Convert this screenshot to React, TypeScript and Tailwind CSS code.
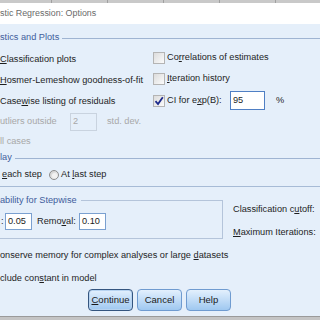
import React from 'react';

const Check = ({ checked = false }: { checked?: boolean }) => (
  <div className="w-[12px] h-[12px] border border-[#b4b4b4] bg-gradient-to-br from-[#dcdcdc] to-[#fbfbfb] flex items-center justify-center shrink-0">
    {checked && (
      <svg width="10" height="10" viewBox="0 0 10 10">
        <path d="M1.5 5.2 L4 8 L8.8 1.2" stroke="#1c2a8c" strokeWidth="1.8" fill="none" />
      </svg>
    )}
  </div>
);

const Field = ({ value, w }: { value: string; w: string }) => (
  <div className={`${w} h-[17px] flex items-center pl-[2px] border border-[#7aa0d0] bg-white text-[#1a1a1a]`}>
    {value}
  </div>
);

const Btn = ({ children, focus = false }: { children: React.ReactNode; focus?: boolean }) => (
  <button
    className={`w-[45px] h-[22px] rounded-[4px] bg-gradient-to-b from-[#e3f0fd] to-[#9fc8f0] text-[9.5px] text-[#1a1a1a] ${
      focus ? 'border border-[#34557f] shadow-[inset_0_0_0_1px_#b7d3f0]' : 'border border-[#6f9bd0]'
    }`}
  >
    {children}
  </button>
);

export default function App() {
  return (
    <div className="w-[320px] h-[320px] overflow-hidden flex flex-col bg-[#e5effa] font-['Liberation_Sans',Arial,sans-serif] text-[9.2px] text-[#1e1e1e] leading-none">
      <div className="h-[3px] bg-[#c9c9c9] flex">
        <div className="w-[52px] border-r border-[#a0a0a0]" />
        <div className="w-[56px] border-r border-[#a0a0a0]" />
        <div className="w-[56px] border-r border-[#a0a0a0]" />
        <div className="w-[56px] border-r border-[#a0a0a0]" />
        <div className="w-[56px] border-r border-[#a0a0a0]" />
      </div>
      <div className="h-[21px] bg-white flex items-center text-[8.9px] text-[#6a6a6a]">stic Regression: Options</div>

      <div className="mt-[7px] h-[14px] flex items-center gap-[3px] text-[#3f5d9c]">
        <span>stics and Plots</span>
        <div className="flex-1 h-px bg-[#9fb4d2]" />
      </div>

      <div className="mt-[4px] flex flex-col">
        <div className="h-[21px] flex items-center">
          <div className="w-[153px]">
            <u>C</u>lassification plots
          </div>
          <div className="flex items-center gap-[2px] -mt-[3px]">
            <Check />
            <span>
              Co<u>r</u>relations of estimates
            </span>
          </div>
        </div>
        <div className="h-[21px] flex items-center">
          <div className="w-[153px]">
            <u>H</u>osmer-Lemeshow goodness-of-fit
          </div>
          <div className="flex items-center gap-[2px] -mt-[3px]">
            <Check />
            <span>
              <u>I</u>teration history
            </span>
          </div>
        </div>
        <div className="h-[21px] flex items-center">
          <div className="w-[153px]">
            Case<u>w</u>ise listing of residuals
          </div>
          <div className="flex items-center gap-[2px] -mt-[2px]">
            <Check checked />
            <span className="w-[61px]">
              CI for e<u>x</u>p(B):
            </span>
            <div className="w-[35px] h-[19px] border border-[#4f7fc4] bg-white flex items-center pl-[2px]">95</div>
            <span className="ml-[9px]">%</span>
          </div>
        </div>

        <div className="h-[20px] flex items-center text-[#a8a8a8]">
          <span className="w-[70px]">utliers outside</span>
          <div className="w-[27px] h-[18px] border border-[#c9d3df] flex items-center pl-[2px]">2</div>
          <span className="ml-[10px]">std. dev.</span>
        </div>
        <div className="h-[20px] flex items-center text-[#a8a8a8]">ll cases</div>

        <div className="h-[12px] flex items-center gap-[3px] text-[#3f5d9c]">
          <span>lay</span>
          <div className="flex-1 h-px bg-[#9fb4d2]" />
        </div>
        <div className="h-[22px] flex items-center pl-[2px]">
          <span className="w-[47px]">
            <u>e</u>ach step
          </span>
          <div className="w-[10px] h-[10px] rounded-full border border-[#8d8d8d] bg-gradient-to-br from-[#cfcfcf] to-[#f7f7f7] flex items-center justify-center">
            <div className="w-[5px] h-[5px] rounded-full bg-[#f2f2f2]" />
          </div>
          <span className="ml-[2px]">
            At <u>l</u>ast step
          </span>
        </div>
        <div className="h-px bg-[#a7bbd6]" />

        <div className="flex items-start">
          <div className="w-[223px] flex flex-col">
            <div className="mt-[8px] h-[12px] flex items-stretch text-[#3f5d9c]">
              <span className="self-center">ability for Stepwise</span>
              <div className="flex-1 ml-[4px] mt-[5px] border-t border-r border-[#b4c4da]" />
            </div>
            <div className="h-[32px] border-r border-b border-[#b4c4da] pt-[6px] flex items-start pl-[1px]">
              <span className="w-[4px] mt-[4px]">:</span>
              <Field value="0.05" w="w-[27px]" />
              <span className="ml-[5px] w-[42px] mt-[4px]">
                Remo<u>v</u>al:
              </span>
              <Field value="0.10" w="w-[27px]" />
            </div>
          </div>
          <div className="ml-[10px] flex flex-col">
            <div className="mt-[18px]">
              Classification c<u>u</u>toff:
            </div>
            <div className="mt-[14px]">
              <u>M</u>aximum Iterations:
            </div>
          </div>
        </div>

        <div className="h-[12px]" />
        <div className="h-[9px]">
          onserve memory for complex analyses or large <u>d</u>atasets
        </div>
        <div className="h-[14px]" />
        <div className="h-[9px]">
          clude con<u>s</u>tant in model
        </div>

        <div className="mt-[6px] flex gap-[4px] pl-[88px]">
          <Btn focus>
            <u>C</u>ontinue
          </Btn>
          <Btn>Cancel</Btn>
          <Btn>Help</Btn>
        </div>
      </div>
      <div className="flex-1" />
      <div className="h-[4px] bg-[#c4c4c4] border-t border-[#9a9a9a]" />
    </div>
  );
}
